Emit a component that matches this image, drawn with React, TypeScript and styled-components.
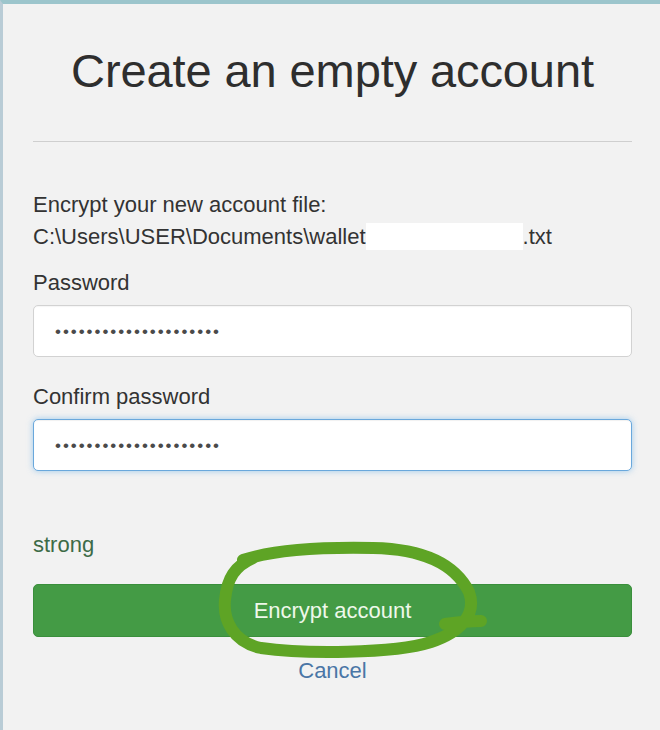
import React from "react";
import styled, { createGlobalStyle } from "styled-components";

const Global = createGlobalStyle`
  html, body { margin: 0; padding: 0; background: #f2f2f2; }
  body { font-family: "Liberation Sans", Arial, sans-serif; color: #333; }
`;

const Page = styled.div`
  position: relative;
  width: 660px;
  height: 730px;
  box-sizing: border-box;
  background: #f2f2f2;
  border-top: 4px solid #9cc5cc;
  border-left: 3px solid #b9ccd6;
  padding: 0 28px 0 30px;
  display: flex;
  flex-direction: column;
  overflow: hidden;
`;

const Title = styled.h1`
  margin: 41px 0 0;
  font-size: 47px;
  font-weight: 400;
  line-height: 52px;
  text-align: center;
  color: #2e2e2e;
  letter-spacing: -0.1px;
`;

const Rule = styled.hr`
  margin: 44px 0 0;
  border: 0;
  border-top: 1px solid #cfcfcf;
`;

const Info = styled.div`
  margin-top: 47px;
  font-size: 22px;
  line-height: 32px;
  color: #333;
`;

const Redact = styled.span`
  display: inline-block;
  width: 157px;
  height: 27px;
  background: #fff;
  vertical-align: -6px;
`;

const Label = styled.div<{ $top: number }>`
  margin-top: ${(p) => p.$top}px;
  font-size: 22px;
  line-height: 28px;
  color: #333;
`;

const Field = styled.div<{ $focus?: boolean }>`
  margin-top: 8px;
  height: 52px;
  box-sizing: border-box;
  background: #fff;
  border: 1px solid ${(p) => (p.$focus ? "#6aa8dc" : "#d2d2d2")};
  border-radius: 5px;
  box-shadow: ${(p) =>
    p.$focus ? "inset 0 1px 1px rgba(0,0,0,.06), 0 0 6px rgba(102,175,233,.6)" : "inset 0 1px 1px rgba(0,0,0,.04)"};
  display: flex;
  align-items: center;
  padding-left: 21px;
`;

const Dots = styled.span`
  font-size: 17px;
  letter-spacing: 1.95px;
  color: #4a4a4a;
  line-height: 1;
`;

const Strength = styled.div`
  margin-top: 60px;
  font-size: 22px;
  line-height: 28px;
  color: #3d6b47;
`;

const Button = styled.button`
  margin-top: 25px;
  height: 53px;
  width: 100%;
  border: 1px solid #3a8f3c;
  border-radius: 5px;
  background: #449b45;
  color: #eef8ea;
  font-family: "Liberation Sans", Arial, sans-serif;
  font-size: 22px;
  cursor: pointer;
`;

const Cancel = styled.a`
  margin-top: 20px;
  align-self: center;
  font-size: 22px;
  line-height: 28px;
  color: #4a76a6;
  text-decoration: none;
`;

const Scribble = styled.svg`
  position: absolute;
  left: 0;
  top: 0;
  pointer-events: none;
`;

const dots = "•".repeat(21);

export default function App() {
  return (
    <>
      <Global />
      <Page>
        <Title>Create an empty account</Title>
        <Rule />
        <Info>
          Encrypt your new account file:
          <br />
          C:\Users\USER\Documents\wallet<Redact />.txt
        </Info>
        <Label $top={16}>Password</Label>
        <Field>
          <Dots>{dots}</Dots>
        </Field>
        <Label $top={26}>Confirm password</Label>
        <Field $focus>
          <Dots>{dots}</Dots>
        </Field>
        <Strength>strong</Strength>
        <Button>Encrypt account</Button>
        <Cancel href="#">Cancel</Cancel>
        <Scribble width="660" height="730" viewBox="0 0 660 730">
          <path
            d="M240 556 C270 546 320 543 370 544 C420 545 452 560 466 588 C474 610 458 628 428 638 C390 650 300 650 258 644 C230 638 220 616 222 596 C224 574 232 562 250 554 M442 620 C456 618 468 617 478 617"
            fill="none"
            stroke="#5ea425"
            strokeWidth="12"
            strokeLinecap="round"
            strokeLinejoin="round"
          />
        </Scribble>
      </Page>
    </>
  );
}
